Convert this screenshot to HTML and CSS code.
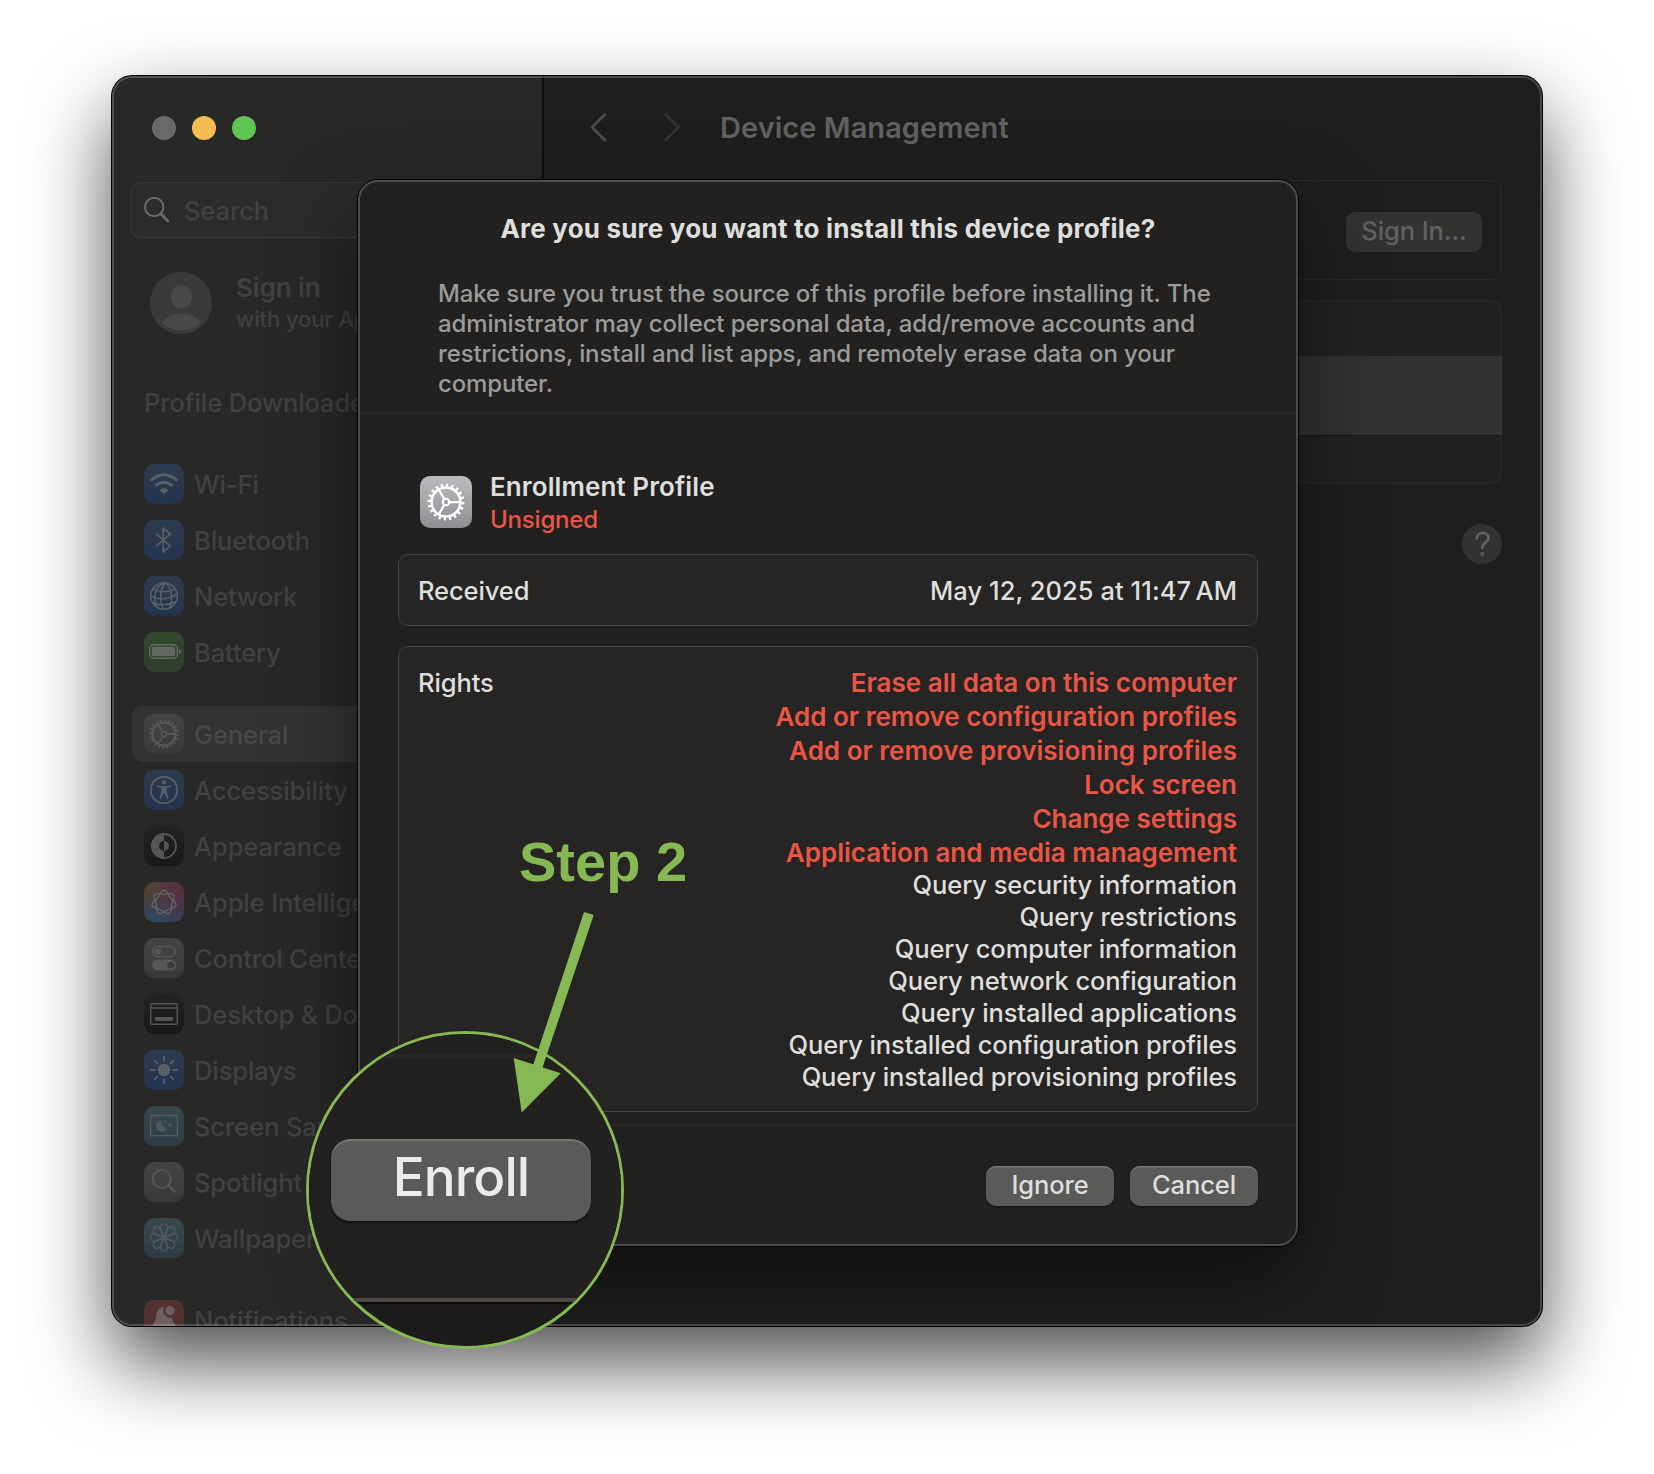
FILE: index.html
```html
<!DOCTYPE html>
<html lang="en">
<head>
<meta charset="utf-8">
<title>Device Management</title>
<link rel="stylesheet" href="styles.css">
</head>
<body>
<svg class="defs" width="0" height="0" aria-hidden="true">
  <defs>
    <symbol id="gear" viewBox="0 0 40 40">
      <g fill="none" stroke="currentColor">
        <circle cx="20" cy="20" r="13.6" stroke-width="2.4" pathLength="60" stroke-dasharray="1.3 1.7"/>
        <circle cx="20" cy="20" r="11.6" stroke-width="2"/>
        <circle cx="20" cy="20" r="2.6" stroke-width="1.7"/>
        <path d="M22.8 20H32M18.6 17.6L14 9.8M18.6 22.4L14 30.2" stroke-width="1.8"/>
      </g>
    </symbol>
  </defs>
</svg>

<main class="window">
  <aside class="sidebar">
    <div class="lights"><i class="light"></i><i class="light yellow"></i><i class="light green"></i></div>
    <div class="search">
      <svg width="28" height="28" viewBox="0 0 28 28" fill="none" stroke="currentColor"><circle cx="11.2" cy="11" r="9.2" stroke-width="2"/><path d="M18 18l7 7" stroke-width="2.6" stroke-linecap="round"/></svg>
      <span>Search</span>
    </div>
    <div class="account">
      <svg width="62" height="62" viewBox="0 0 62 62"><circle cx="31" cy="31" r="31" fill="#3a3a39"/><ellipse cx="31.3" cy="25" rx="10.5" ry="11.7" fill="#484848"/><path d="M12 50.500C20 38.500 43 38.500 50.500 50.500C40 60.800 22 60.800 12 50.500z" fill="#484848"/></svg>
      <div class="account-text"><b>Sign in</b><span>with your Apple ID</span></div>
    </div>
    <nav class="nav">
      <div class="row"><span>Profile Downloaded</span></div>
      <div class="group">
        <div class="row"><svg class="icon blue" viewBox="0 0 40 40"><g fill="none" stroke="currentColor" stroke-width="2.8"><path d="M6.500 16.800Q20 4.800 33.500 16.800M11.500 21.900Q20 14.600 28.500 21.900"/></g><path d="M15.600 26.200Q20 22 24.400 26.200L20 30.300z" fill="currentColor"/></svg><span>Wi-Fi</span></div>
        <div class="row"><svg class="icon blue" viewBox="0 0 40 40"><path d="M12.500 14.200L26.300 25.800L19.200 32V8L26.300 14.200L12.500 25.800" fill="none" stroke="currentColor" stroke-width="1.700" stroke-linejoin="round" stroke-linecap="round"/></svg><span>Bluetooth</span></div>
        <div class="row"><svg class="icon blue" viewBox="0 0 40 40"><g fill="none" stroke="currentColor" stroke-width="1.500"><circle cx="20" cy="20" r="13.300"/><path d="M21.500 6.800C16 12 15 25 19.500 33.200M21.500 6.800C28 13 29.500 23 25.500 32M20.500 7C12 9 8.500 20 12.500 30.500M9 12.500C15 17 28 16 31 12.500M6.800 19.500C14 25.500 29 22.500 33 17M8.500 26.500C15 30.500 26 28.500 31.500 26"/></g></svg><span>Network</span></div>
        <div class="row"><svg class="icon green-bg" viewBox="0 0 40 40"><rect x="5.700" y="12.700" width="27.600" height="13.600" rx="4" fill="none" stroke="currentColor" stroke-width="1.400"/><rect x="7.800" y="14.800" width="23.400" height="9.400" rx="2.200" fill="currentColor"/><path d="M35 17q1.800.6 1.800 2.500t-1.800 2.500z" fill="currentColor"/></svg><span>Battery</span></div>
      </div>
      <div class="group">
        <div class="row selected"><svg class="icon gray"><use href="#gear"/></svg><span>General</span></div>
        <div class="row"><svg class="icon blue" viewBox="0 0 40 40"><circle cx="20" cy="20" r="13.200" fill="none" stroke="currentColor" stroke-width="1.700"/><circle cx="20" cy="12.500" r="2" fill="currentColor"/><path d="M13 15.500l5 .7h4l5-.7.2 1.300-4.500 1v4l1.800 7-1.400.4L20.400 23h-.8l-2.700 6.200-1.400-.4 1.800-7v-4l-4.500-1z" fill="currentColor"/></svg><span>Accessibility</span></div>
        <div class="row"><svg class="icon black" viewBox="0 0 40 40"><circle cx="20" cy="20" r="12" fill="none" stroke="currentColor" stroke-width="1.800"/><path d="M20 7.200A12.800 12.800 0 0 0 20 32.800V25A5 5 0 0 1 20 15zM20 15a5 5 0 0 1 0 10z" fill="currentColor"/></svg><span>Appearance</span></div>
        <div class="row"><svg class="icon rainbow" viewBox="0 0 40 40"><g fill="none" stroke="currentColor" stroke-width="1.500" transform="translate(20 20.500)">
          <path id="lobe" d="M-6.250-5C-4-7.800-3-12.300 0-12.300S4-7.800 6.250-5"/>
          <use href="#lobe" transform="rotate(51.430)"/><use href="#lobe" transform="rotate(102.860)"/><use href="#lobe" transform="rotate(154.290)"/><use href="#lobe" transform="rotate(205.710)"/><use href="#lobe" transform="rotate(257.140)"/><use href="#lobe" transform="rotate(308.570)"/></g></svg><span>Apple Intelligence</span></div>
        <div class="row"><svg class="icon gray" viewBox="0 0 40 40"><rect x="8.600" y="8.600" width="22.800" height="10" rx="5" fill="none" stroke="currentColor" stroke-width="1.400"/><circle cx="13.800" cy="13.600" r="3.200" fill="currentColor"/><rect x="8" y="21.600" width="24" height="11" rx="5.500" fill="currentColor"/><circle cx="26.800" cy="27.100" r="3.500" fill="#3a3a3a"/></svg><span>Control Center</span></div>
        <div class="row"><svg class="icon black" viewBox="0 0 40 40"><rect x="6.700" y="9.700" width="26.600" height="20.600" rx="1.500" fill="none" stroke="currentColor" stroke-width="1.400"/><path d="M7 14h26" stroke="currentColor" stroke-width="1.300"/><rect x="11" y="23" width="18" height="4" rx="1" fill="currentColor"/></svg><span>Desktop &amp; Dock</span></div>
        <div class="row"><svg class="icon blue" viewBox="0 0 40 40"><circle cx="20" cy="20" r="6.200" fill="currentColor"/><path d="M20 7v3.500M20 29.500V33M7 20h3.500M29.500 20H33M10.800 10.800l2.500 2.500M26.700 26.700l2.500 2.500M29.200 10.800l-2.500 2.500M13.300 26.700l-2.500 2.500" stroke="currentColor" stroke-width="1.900" stroke-linecap="round"/></svg><span>Displays</span></div>
        <div class="row"><svg class="icon teal" viewBox="0 0 40 40"><rect x="6.700" y="9.700" width="26.600" height="20" fill="none" stroke="currentColor" stroke-width="1.400"/><path d="M17.200 14.500A5.600 5.600 0 1 0 23 22A6.200 6.200 0 0 1 17.200 14.500zM26 16l1 2.300 2.300 1-2.300 1-1 2.300-1-2.300-2.300-1 2.300-1zM21 13.500l.6 1.400 1.400.6-1.400.6-.6 1.400-.6-1.400-1.400-.6 1.400-.6z" fill="currentColor"/></svg><span>Screen Saver</span></div>
        <div class="row"><svg class="icon gray" viewBox="0 0 40 40"><g fill="none" stroke="currentColor"><circle cx="17.700" cy="17" r="9" stroke-width="1.600"/><path d="M24.500 23.500l6.300 6.200" stroke-width="2.200" stroke-linecap="round"/></g></svg><span>Spotlight</span></div>
        <div class="row"><svg class="icon teal" viewBox="0 0 40 40"><g fill="none" stroke="currentColor" stroke-width="1.300" transform="translate(20 19.500)">
          <path id="petal" d="M0-1L-3.300-8A3.800 3.800 0 1 1 3.300-8z"/>
          <use href="#petal" transform="rotate(45)"/><use href="#petal" transform="rotate(90)"/><use href="#petal" transform="rotate(135)"/><use href="#petal" transform="rotate(180)"/><use href="#petal" transform="rotate(225)"/><use href="#petal" transform="rotate(270)"/><use href="#petal" transform="rotate(315)"/></g></svg><span>Wallpaper</span></div>
      </div>
      <div class="group">
        <div class="row"><svg class="icon red" viewBox="0 0 40 40"><path d="M20.500 7C14 7.500 12.500 12 12.200 17C12 21.500 8 24 7.500 29h25C32 24 28.300 22 28 17.500A7 7 0 0 1 20.500 7z" fill="currentColor"/><circle cx="26" cy="10.800" r="4.700" fill="currentColor"/></svg><span>Notifications</span></div>
      </div>
    </nav>
  </aside>

  <section class="content">
    <header class="toolbar">
      <svg width="90" height="30" viewBox="0 0 90 30" fill="none" stroke-width="2.800" stroke-linecap="round" stroke-linejoin="round"><path d="M14.800 1.500L2 14.200l12.800 12.800" stroke="#4a4a49"/><path d="M75.500 1.500L88.500 14.200L75.500 27" stroke="#333332"/></svg>
      <h1>Device Management</h1>
    </header>
    <div class="card signin-card"><span class="btn-dim">Sign In...</span></div>
    <div class="card list-card"><div class="list-selected"></div></div>
    <div class="help"><svg width="40" height="40" viewBox="0 0 40 40" fill="none" stroke="#616160" stroke-width="2.800" stroke-linecap="round"><path d="M14.800 14.300C15 7 26.500 7.300 26.500 14C26.500 18.500 20.300 18.500 20.300 24"/><circle cx="20.200" cy="30" r=".6"/></svg></div>
  </section>

  <section class="sheet">
    <header class="sheet-head">
      <h2>Are you sure you want to install this device profile?</h2>
      <p>Make sure you trust the source of this profile before installing it. The<br>administrator may collect personal data, add/remove accounts and<br>restrictions, install and list apps, and remotely erase data on your<br>computer.</p>
    </header>
    <div class="sheet-body">
      <div class="profile">
        <svg class="profile-icon"><use href="#gear"/></svg>
        <div class="profile-text"><b>Enrollment Profile</b><span>Unsigned</span></div>
      </div>
      <div class="box received"><span>Received</span><span class="date">May 12, 2025 at 11:47&#8239;AM</span></div>
      <div class="box rights">
        <span>Rights</span>
        <ul>
          <li class="danger">Erase all data on this computer</li>
          <li class="danger">Add or remove configuration profiles</li>
          <li class="danger">Add or remove provisioning profiles</li>
          <li class="danger">Lock screen</li>
          <li class="danger">Change settings</li>
          <li class="danger">Application and media management</li>
          <li>Query security information</li>
          <li>Query restrictions</li>
          <li>Query computer information</li>
          <li>Query network configuration</li>
          <li>Query installed applications</li>
          <li>Query installed configuration profiles</li>
          <li>Query installed provisioning profiles</li>
        </ul>
      </div>
    </div>
    <footer class="sheet-foot"><span class="btn">Ignore</span><span class="btn">Cancel</span></footer>
  </section>
</main>

<div class="lens"><div class="lens-top"></div><div class="lens-body"><span class="enroll">Enroll</span></div></div>
<div class="step">Step 2</div>
<svg class="arrow" width="90" height="210" viewBox="0 0 90 210" fill="#86b954"><path d="M79 2L88.700 5L37.200 158.500L28 155.500z"/><path d="M8.700 148L55.700 163.300L16.700 202.500z"/></svg>
</body>
</html>
```
FILE: styles.css
```css
* { box-sizing: border-box; }

body {
  margin: 0;
  width: 1654px;
  height: 1474px;
  padding: 76px 112px;
  background: #fff;
  font-family: Inter, "Liberation Sans", sans-serif;
  font-size: 25.500px;
  font-weight: 450;
  letter-spacing: -.1px;
  line-height: 32px;
  overflow: hidden;
  position: relative;
}

h1, h2, p, ul { margin: 0; padding: 0; }
.defs { position: absolute; }

/* Window frame */
.window {
  position: relative;
  display: flex;
  width: 1430px;
  height: 1250px;
  border-radius: 20px;
  background: #1e1e1c;
  box-shadow: 0 0 0 1px #000, 0 36px 80px rgba(0, 0, 0, .7);
  overflow: hidden;
}
.window::after {
  content: "";
  position: absolute;
  inset: 0;
  border: 2px solid rgba(255, 255, 255, .19);
  border-radius: 20px;
}

/* Sidebar */
.sidebar {
  flex: none;
  width: 432px;
  padding: 40px 20px 0 18px;
  background: #282827;
  border-right: 2px solid #0d0d0c;
  color: #414141;
  white-space: nowrap;
}
.lights { display: flex; gap: 16px; padding-left: 22px; }
.light { width: 24px; height: 24px; border-radius: 50%; background: #6a6a69; }
.light.yellow { background: #f5bd4f; }
.light.green { background: #61c554; }
.search {
  display: flex;
  align-items: center;
  gap: 13px;
  height: 56px;
  margin-top: 42px;
  padding-left: 12px;
  border: 1px solid #343434;
  border-bottom-color: #3c3c3c;
  border-radius: 11px;
  background: #2b2b2b;
}
.search svg { color: #6b6b6a; }
.search span, .row span { padding-top: 2px; }
.account { display: flex; align-items: center; gap: 24px; margin: 34px 0 0 20px; height: 62px; }
.account-text { display: flex; flex-direction: column; }
.account-text b { font-weight: 600; font-size: 26px; }
.account-text span { font-size: 22px; line-height: 31px; }
.nav { display: flex; flex-direction: column; gap: 26px; margin: 40px 0 0 2px; }
.row { display: flex; align-items: center; gap: 10px; height: 56px; padding-left: 12px; border-radius: 10px; }
.row.selected { background: #333333; color: #484848; }
.icon { flex: none; width: 40px; height: 40px; border-radius: 10px; color: #5a5b5d; }
.blue { background: linear-gradient(#2c3b4d, #25344f); color: #5b6067; }
.green-bg { background: linear-gradient(#33482f, #2c402b); color: #626a61; }
.gray { background: linear-gradient(#444444, #393939); color: #575757; }
.black { background: linear-gradient(#232323, #191919); color: #555555; }
.teal { background: linear-gradient(#39484b, #2d3d48); color: #52595c; }
.red { background: linear-gradient(#543331, #4e2c2b); color: #6c6160; }
.rainbow {
  background:
    radial-gradient(circle at 0 0, #57452c, transparent 60%),
    radial-gradient(circle at 100% 20%, #592f3d, transparent 60%),
    radial-gradient(circle at 30% 100%, #2c4a5a, transparent 70%),
    #443650;
  color: #66605f;
}

/* Content pane */
.content { flex: 1; padding: 0 40px 0 38px; color: #616160; }
.toolbar { display: flex; align-items: center; gap: 40px; height: 104px; padding-left: 8px; }
.toolbar h1 { padding-bottom: 1px; font-size: 29px; font-weight: 600; line-height: 36px; letter-spacing: .05px; }
.card { border: 1px solid #2a2a29; border-radius: 10px; background: #1e1e1e; }
.signin-card { display: flex; justify-content: flex-end; height: 100px; padding: 31px 19px; }
.btn-dim {
  width: 136px;
  height: 40px;
  border-radius: 9px;
  background: #323231;
  text-align: center;
  line-height: 37px;
}
.list-card { height: 184px; margin-top: 20px; padding-top: 55px; background: #222222; }
.list-selected { height: 80px; margin: 0 -1px; background: #323232; border-bottom: 1px solid #191919; }
.help { width: 40px; height: 40px; margin: 40px 0 0 auto; border-radius: 50%; background: #323232; }

/* Modal sheet */
.sheet {
  position: absolute;
  left: 246px;
  top: 104px;
  width: 940px;
  height: 1066px;
  display: flex;
  flex-direction: column;
  border: 2px solid #4c4c4a;
  border-radius: 20px;
  background: #222120;
  color: #dededd;
  box-shadow: 0 0 0 1px #000, 0 36px 80px rgba(0, 0, 0, .5);
}
.sheet-head { height: 232px; padding: 31px 0 0 78px; border-bottom: 2px solid #2b2a29; }
.sheet-head h2 { margin-left: -78px; text-align: center; font-size: 26px; line-height: 32px; font-weight: 700; letter-spacing: .19px; }
.sheet-head p { margin-top: 34px; font-size: 24px; line-height: 30px; letter-spacing: -.13px; color: #9b9b9a; white-space: nowrap; }
.sheet-body { flex: 1; padding: 57px 38px 0; }
.profile { display: flex; gap: 18px; height: 60px; padding-left: 22px; }
.profile-icon { width: 52px; height: 52px; margin-top: 5px; padding: 0 1px; border-radius: 10px; background: linear-gradient(#bcbbc0, #8f8e93); color: #fff; }
.profile-text { display: flex; flex-direction: column; }
.profile-text b { font-weight: 600; font-size: 26px; letter-spacing: .1px; }
.profile-text span { padding-top: 1px; font-size: 24px; letter-spacing: -.2px; color: #eb5545; }
.box { display: flex; justify-content: space-between; border: 1px solid #454443; border-radius: 10px; background: #262523; padding: 0 20px 0 19px; }
.received { height: 72px; margin-top: 23px; padding-top: 2px; align-items: center; }
.date { letter-spacing: .05px; }
.rights { height: 466px; margin-top: 20px; padding-top: 18px; }
.rights > span { padding-top: 2px; }
.rights ul { list-style: none; text-align: right; }
.rights li { height: 32px; }
.rights li.danger { height: 34px; line-height: 36px; font-size: 26px; font-weight: 600; letter-spacing: 0; color: #eb5545; }
.sheet-foot { display: flex; justify-content: flex-end; gap: 16px; height: 120px; padding: 40px 38px 0; border-top: 2px solid #2b2a29; }
.btn {
  width: 128px;
  height: 40px;
  border-radius: 10px;
  background: #5a5a58;
  box-shadow: inset 0 1.500px 0 #777775, 0 1px 2px rgba(0, 0, 0, .5);
  text-align: center;
  line-height: 37px;
}

/* Magnified callout */
.lens {
  position: absolute;
  left: 306px;
  top: 1031px;
  width: 318px;
  height: 318px;
  border: 3px solid #86b954;
  border-radius: 50%;
  background: #1b1b1a;
  overflow: hidden;
}
.lens-top { height: 24px; background: #22211f; border-bottom: 4px solid #2a2927; }
.lens-body {
  height: 244px;
  padding: 81px 0 0 22px;
  background: #22211f;
  border-bottom: 4px solid #4b4846;
  box-shadow: 0 2px 1px #0a0a0a;
}
.enroll {
  display: block;
  width: 260px;
  height: 82px;
  border-radius: 20px;
  background: #5a5a58;
  box-shadow: inset 0 3px 1px -1px #777572, 0 2px 3px rgba(0, 0, 0, .45);
  color: #ebebea;
  text-align: center;
  font-size: 53px;
  font-weight: 500;
  letter-spacing: -.9px;
  line-height: 77px;
}
.step {
  position: absolute;
  left: 519px;
  top: 830px;
  color: #86b954;
  font: bold 56px/64px "Liberation Sans", sans-serif;
  letter-spacing: 0;
}
.arrow { position: absolute; left: 505px; top: 910px; }
```
